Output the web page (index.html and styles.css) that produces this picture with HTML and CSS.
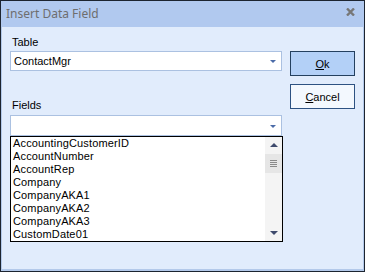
FILE: index.html
```html
<!DOCTYPE html>
<html lang="en">
<head>
    <meta charset="UTF-8">
    <title>Insert Data Field</title>
    <link rel="stylesheet" href="styles.css">
</head>
<body>
    <section class="window">
        <header class="titlebar">
            <span class="title">Insert Data Field</span>
            <svg class="close" width="9" height="8" viewBox="0 0 9 8">
                <path d="M1 0.5 L8 7.5 M8 0.5 L1 7.5" stroke="#777" stroke-width="2.4" fill="none"/>
            </svg>
        </header>
        <div class="content">
            <div class="left">
                <label class="label">Table</label>
                <div class="combo table-combo">
                    <span>ContactMgr</span>
                    <i class="drop"></i>
                </div>
                <label class="label fields-label">Fields</label>
                <div class="combo fields-combo">
                    <span></span>
                    <i class="drop"></i>
                </div>
                <div class="listbox">
                    <ul class="items">
                        <li>AccountingCustomerID</li>
                        <li>AccountNumber</li>
                        <li>AccountRep</li>
                        <li>Company</li>
                        <li>CompanyAKA1</li>
                        <li>CompanyAKA2</li>
                        <li>CompanyAKA3</li>
                        <li>CustomDate01</li>
                    </ul>
                    <div class="scrollbar">
                        <i class="arrow up"></i>
                        <div class="thumb"><b></b><b></b><b></b><b></b></div>
                        <div class="track"></div>
                        <i class="arrow down"></i>
                    </div>
                </div>
            </div>
            <div class="right">
                <button class="btn ok"><u>O</u>k</button>
                <button class="btn cancel"><u>C</u>ancel</button>
            </div>
        </div>
    </section>
</body>
</html>
```

FILE: styles.css
```css
*{
    margin: 0;
    padding: 0;
    box-sizing: border-box;
}
body{
    width: 365px;
    height: 272px;
    font-family: "Liberation Sans", Arial, sans-serif;
    font-size: 11px;
    color: #000;
}
.window{
    width: 365px;
    height: 272px;
    border: 1px solid #1c2430;
    background: #e1ecfc;
    display: flex;
    flex-direction: column;
}
.titlebar{
    height: 26px;
    background: #b1c9ef;
    display: flex;
    align-items: center;
    justify-content: space-between;
    padding: 0 9px 2px 5px;
}
.title{
    font-family: "Noto Sans", sans-serif;
    font-size: 12px;
    color: #6e6e6e;
}
.close{
    display: block;
    margin-top: -2px;
}
.content{
    flex: 1;
    border-left: 1px solid #b3c9ea;
    border-right: 1px solid #b3c9ea;
    border-bottom: 2px solid #b3c9ea;
    display: flex;
    padding: 9px 0 0 8px;
    gap: 7px;
}
.left{
    width: 273px;
    display: flex;
    flex-direction: column;
}
.label{
    display: block;
    height: 13px;
    line-height: 13px;
    padding-left: 2px;
}
.combo{
    height: 20px;
    margin-top: 2px;
    background: #fff;
    border: 1px solid #abc1e1;
    display: flex;
    align-items: center;
    justify-content: space-between;
    padding: 0 5px 0 3px;
    margin-right: 1px;
}
.drop{
    width: 0;
    height: 0;
    border-left: 3px solid transparent;
    border-right: 3px solid transparent;
    border-top: 3px solid #4a6ba8;
    margin-top: 1px;
}
.fields-label{
    margin-top: 28px;
}
.fields-combo{
    height: 21px;
    margin-top: 3px;
}
.listbox{
    height: 106px;
    background: #fff;
    border: 1px solid #000;
    display: flex;
}
.items{
    flex: 1;
    list-style: none;
    padding-left: 2px;
}
.items li{
    height: 13px;
    line-height: 13px;
    white-space: nowrap;
    letter-spacing: 0.15px;
}
.scrollbar{
    width: 17px;
    background: #f4f4f4;
    display: flex;
    flex-direction: column;
    align-items: center;
}
.arrow{
    width: 0;
    height: 0;
    border-left: 4px solid transparent;
    border-right: 4px solid transparent;
}
.arrow.up{
    border-bottom: 4px solid #3e4a6c;
    margin-top: 6px;
}
.arrow.down{
    border-top: 4px solid #3e4a6c;
    margin-bottom: 6px;
}
.thumb{
    width: 17px;
    height: 19px;
    margin-top: 7px;
    background: #e6e6e6;
    display: flex;
    flex-direction: column;
    align-items: center;
    justify-content: center;
    gap: 1px;
}
.thumb b{
    width: 7px;
    height: 1px;
    background: #8a8a8a;
}
.track{
    flex: 1;
}
.right{
    width: 65px;
    display: flex;
    flex-direction: column;
    padding-top: 15px;
    gap: 8px;
}
.btn{
    height: 25px;
    font-family: "Liberation Sans", Arial, sans-serif;
    font-size: 11px;
    color: #000;
    background: #f3f8fe;
    border: 1px solid #2d5282;
}
.btn.ok{
    background: #b3d0f7;
    border-color: #24405f;
}
.btn u{
    text-decoration: underline;
}
```
